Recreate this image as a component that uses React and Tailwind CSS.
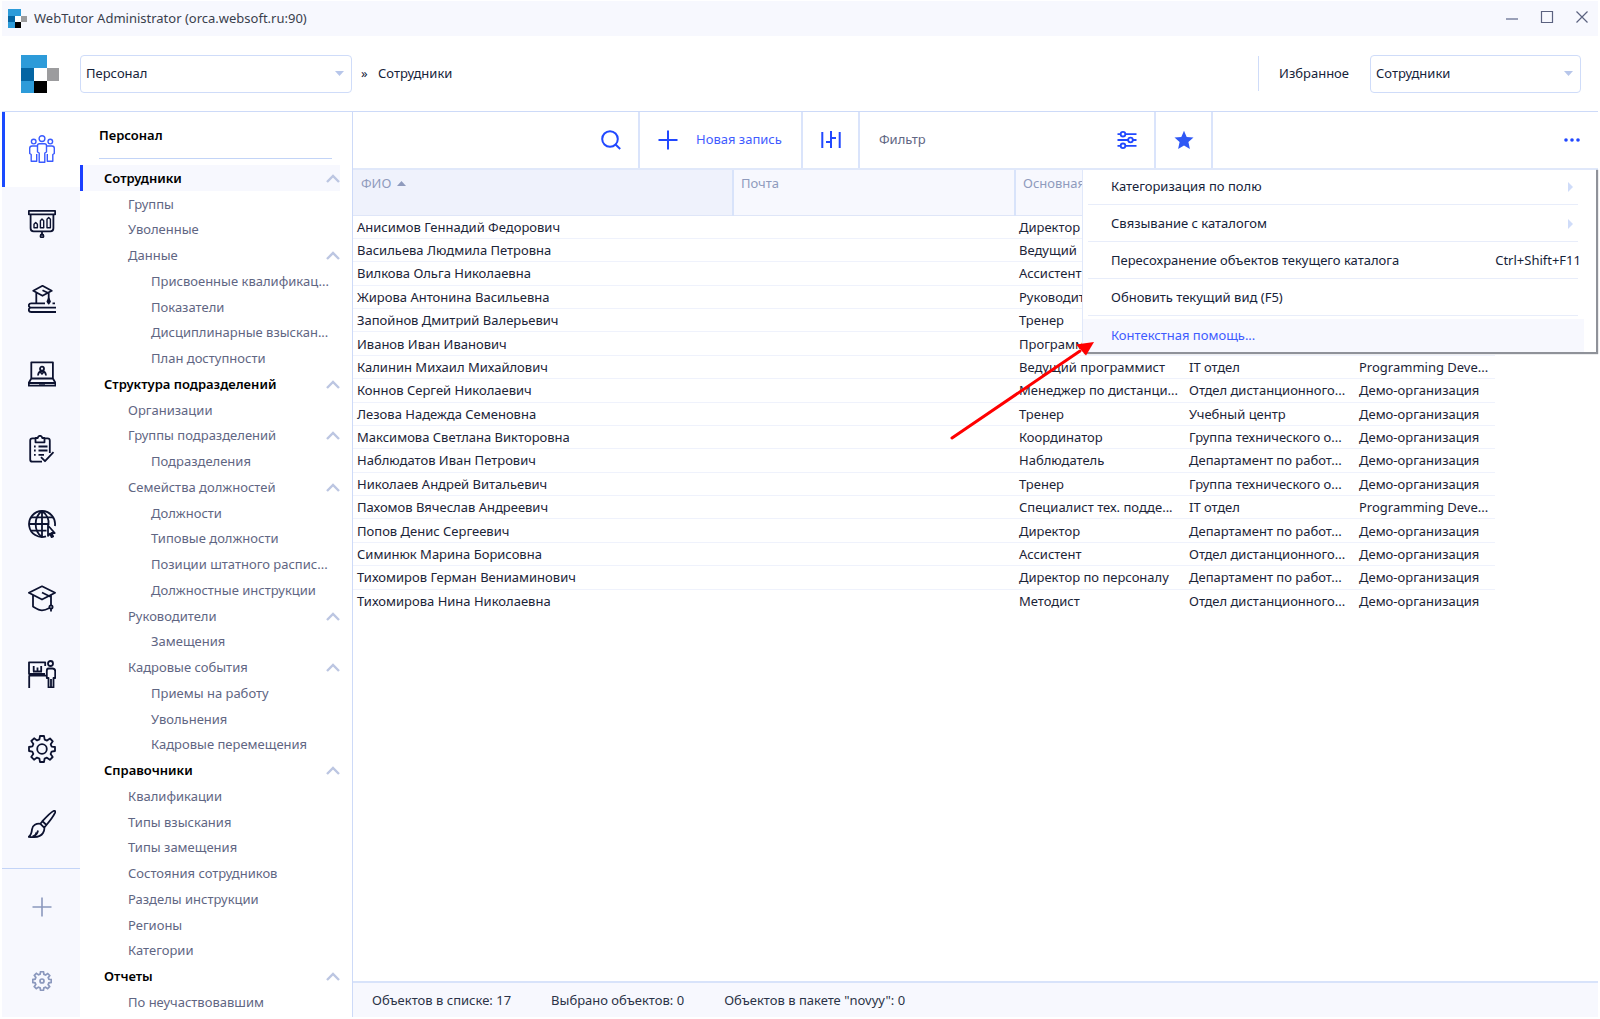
import React, { useState } from "react";

// Sidebar tree: [title, level, has children]
const treeItems = [
    ["Сотрудники", 0, true],
    ["Группы", 1, false],
    ["Уволенные", 1, false],
    ["Данные", 1, true],
    ["Присвоенные квалификац...", 2, false],
    ["Показатели", 2, false],
    ["Дисциплинарные взыскан...", 2, false],
    ["План доступности", 2, false],
    ["Структура подразделений", 0, true],
    ["Организации", 1, false],
    ["Группы подразделений", 1, true],
    ["Подразделения", 2, false],
    ["Семейства должностей", 1, true],
    ["Должности", 2, false],
    ["Типовые должности", 2, false],
    ["Позиции штатного распис...", 2, false],
    ["Должностные инструкции", 2, false],
    ["Руководители", 1, true],
    ["Замещения", 2, false],
    ["Кадровые события", 1, true],
    ["Приемы на работу", 2, false],
    ["Увольнения", 2, false],
    ["Кадровые перемещения", 2, false],
    ["Справочники", 0, true],
    ["Квалификации", 1, false],
    ["Типы взыскания", 1, false],
    ["Типы замещения", 1, false],
    ["Состояния сотрудников", 1, false],
    ["Разделы инструкции", 1, false],
    ["Регионы", 1, false],
    ["Категории", 1, false],
    ["Отчеты", 0, true],
    ["По неучаствовавшим", 1, false],
];

const levelClass = ["pl-[21px] font-semibold text-black", "pl-[45px] text-[#5f6683]", "pl-[68px] text-[#5f6683]"];

const employees = [
    ["Анисимов Геннадий Федорович", "Директор", "", ""],
    ["Васильева Людмила Петровна", "Ведущий", "", ""],
    ["Вилкова Ольга Николаевна", "Ассистент", "", ""],
    ["Жирова Антонина Васильевна", "Руководитель", "", ""],
    ["Запойнов Дмитрий Валерьевич", "Тренер", "", ""],
    ["Иванов Иван Иванович", "Программист", "", ""],
    ["Калинин Михаил Михайлович", "Ведущий программист", "IT отдел", "Programming Deve..."],
    ["Коннов Сергей Николаевич", "Менеджер по дистанци...", "Отдел дистанционного...", "Демо-организация"],
    ["Лезова Надежда Семеновна", "Тренер", "Учебный центр", "Демо-организация"],
    ["Максимова Светлана Викторовна", "Координатор", "Группа технического о...", "Демо-организация"],
    ["Наблюдатов Иван Петрович", "Наблюдатель", "Департамент по работ...", "Демо-организация"],
    ["Николаев Андрей Витальевич", "Тренер", "Группа технического о...", "Демо-организация"],
    ["Пахомов Вячеслав Андреевич", "Специалист тех. подде...", "IT отдел", "Programming Deve..."],
    ["Попов Денис Сергеевич", "Директор", "Департамент по работ...", "Демо-организация"],
    ["Симинюк Марина Борисовна", "Ассистент", "Отдел дистанционного...", "Демо-организация"],
    ["Тихомиров Герман Вениаминович", "Директор по персоналу", "Департамент по работ...", "Демо-организация"],
    ["Тихомирова Нина Николаевна", "Методист", "Отдел дистанционного...", "Демо-организация"],
];

const menuItems = [
    { label: "Категоризация по полю", submenu: true },
    { label: "Связывание с каталогом", submenu: true },
    { label: "Пересохранение объектов текущего каталога", shortcut: "Ctrl+Shift+F11" },
    { label: "Обновить текущий вид (F5)" },
    { label: "Контекстная помощь...", active: true },
];

const gearPath =
    "M12 1h4l.7 3.6 2.3 1 3-2.1 2.8 2.8-2.1 3 1 2.3L27 12v4l-3.4.6-1 2.4 2.1 3-2.8 2.8-3-2.1-2.3 1L16 27h-4l-.6-3.4-2.4-1-3 2.1-2.8-2.8 2.1-3-1-2.3L1 16v-4l3.4-.6 1-2.4-2.1-3L6.1 3.3l3 2.1 2.3-1z";

function Logo({ className }) {
    return (
        <svg className={className} viewBox="0 0 38 38" shapeRendering="crispEdges" aria-hidden="true">
            <path fill="#2d9bd9" d="M0 0h26v13H0zM0 26h13v12H0z" />
            <path fill="#0465a3" d="M0 13h13v13H0z" />
            <path fill="#fff" d="M13 13h13v13H13z" />
            <path fill="#9c9c9e" d="M26 13h12v13H26z" />
            <path fill="#000" d="M13 26h13v12H13z" />
        </svg>
    );
}

function RailIcon({ children }) {
    return (
        <svg
            className="h-7 w-7"
            viewBox="0 0 28 28"
            fill="none"
            stroke="currentColor"
            strokeWidth="1.8"
            strokeLinejoin="round"
            aria-hidden="true"
        >
            {children}
        </svg>
    );
}

const railItems = [
    {
        name: "Персонал",
        icon: (
            <g strokeWidth="1.4">
                <circle cx="14" cy="3.6" r="2.9" />
                <circle cx="5.7" cy="6.6" r="2.3" />
                <circle cx="22.3" cy="6.6" r="2.3" />
                <path d="M11.5 8.7h5c1.2 0 2 .8 2 2V17l-1.7 1v9.3h-5.6V18l-1.7-1v-6.3c0-1.2.8-2 2-2z" />
                <path d="M9.3 11H4c-1.3 0-2.3.9-2.3 2.2v5.3l1.5 1v6.8h5.5V19M18.7 11H24c1.3 0 2.3.9 2.3 2.2v5.3l-1.5 1v6.8h-5.5V19" />
            </g>
        ),
    },
    {
        name: "Отчеты",
        icon: (
            <>
                <path d="M.8.9h26.4v3.4H.8zM2.6 4.3v14c0 2 1 3 3 3h16.8c2 0 3-1 3-3v-14M14 21.3v3" />
                <circle cx="14" cy="26" r="1.5" />
                <path strokeWidth="1.4" d="M6 17.8v-3.5l1.7-1.7 1.7 1.7v3.5zM12.4 17.8v-7l1.6-1.7 1.7 1.7v7zM19 17.8V9.3l1.7-1.7 1.7 1.7v8.5z" />
            </>
        ),
    },
    {
        name: "Обучение",
        icon: (
            <>
                <path d="M14.5.8 5.3 5.8l9.2 5 9.2-5zM8.3 7.8V18M14.5 5.3l6.2 3v6" />
                <path fill="currentColor" d="m20.7 13.5-1.3 3 1.3 2 1.3-2z" />
                <path d="M17 18.3H3.3c-1.6 0-2.5 1-2.5 2.2s.9 2.2 2.5 2.2H28M24.5 18.3H27M2.5 22.7C1.4 23 .8 23.8.8 25s.9 2 2.500 2H28" />
            </>
        ),
    },
    {
        name: "Вебинары",
        icon: (
            <>
                <path d="M3.3 18.5V2.3h21.600v16.200M3.300 18.500.8 22.700v3h26.600v-3l-2.500-4.200M3.300 18.500h21.600M.8 23h26.400M11 23.600h6" />
                <circle cx="14" cy="8.7" r="2" />
                <path d="M10 15.500c.3-2.700 1.700-4.300 4-4.300s3.700 1.600 4 4.300M12 11.500l2 2.300 2-2.300" />
            </>
        ),
    },
    {
        name: "Тестирование",
        icon: (
            <>
                <path d="M7.500 3.300h-3c-1.500 0-2.300.8-2.300 2.300v18.800c0 1.500.8 2.300 2.300 2.300H14M16.500 3.300h3c1.500 0 2.300.8 2.300 2.300V18M7.500 3h2.200C10 1.500 10.700.8 12 .8s2 .7 2.300 2.200h2.200v4.300h-9z" />
                <path d="M10.500 11.500h9M10.500 15.500h9M10.500 19.800h5.500M6 11.500h1.700M6 15.500h1.700M6 19.800h1.700M13 22.200l4 4 8.500-9" />
            </>
        ),
    },
    {
        name: "Портал",
        icon: (
            <>
                <path d="M18 26.400A13 13 0 1 1 26.900 16" />
                <path d="M14 .9v26.200M14 .9C5.500 7 5.500 21 14 27.100M14 .9c5 3.600 7.200 8.600 6.500 14M.9 14h20M3 7.300h22M3 20.700h15.500" />
                <path d="M20 15.500v10.300l2-2.200 1.600 3.500 1.500-.7-1.600-3.400h3.200z" />
            </>
        ),
    },
    {
        name: "Курсы",
        icon: (
            <>
                <path d="M14 1.300.9 7.800 14 14.500l13.100-6.700zM5 10v11.500c2.500 1.500 6 3.800 9 3.800 2.300 0 5-1 7.500-2.300M14 7.500l9 4.500v8.500M23 12V9.800" />
                <circle cx="23" cy="22" r="1.6" />
                <path d="M23 23.600v3" />
            </>
        ),
    },
    {
        name: "Мероприятия",
        icon: (
            <>
                <path d="M17.200 6V2.300H1v11.500h16M.5 15.700h17.500M1.200 16v12M5 11.500h9M5.700 6v5.500M9.500 7.500v4M13.200 6v5.500M9.500 13.800v2" />
                <circle cx="22.500" cy="3.500" r="2.500" />
                <path d="M20.500 8.500h4c1.700 0 2.700 1 2.700 2.700V18h-1.700v9.500h-5V18h-1.700v-7c0-1.500.5-2.500 1.700-2.500zM23 19v8" />
            </>
        ),
    },
    {
        name: "Настройки",
        icon: (
            <>
                <path d={gearPath} />
                <circle cx="14" cy="14" r="4.800" />
            </>
        ),
    },
    {
        name: "Дизайн",
        icon: (
            <>
                <path d="M25.500 1c1.500-.5 2.200.3 1.600 1.700-1.400 2.900-4.800 7.800-8.700 12.300l-4-3.800C18.300 7 22.900 2.200 25.500 1zM14.400 11.200l-2 2.600 3.800 3.800 2.200-2.600M12.400 13.800c-4-.5-7.900 1.200-8.400 5.500-.3 3-.8 5.500-3.200 7.500 6 .8 12-.2 14.200-3.800 1.200-2 1.600-3.800 1.200-5.400M4.500 26.500c3-1 5-3 5.500-6M8 22.500v2.500" />
            </>
        ),
    },
];

function Rail() {
    return (
        <nav className="flex w-[78px] shrink-0 flex-col bg-[#f7f8fe] text-[#0c1230]">
            {railItems.map((item, index) => (
                <button
                    key={item.name}
                    aria-label={item.name}
                    className={`flex h-[75px] items-center justify-center border-l-[3px] pr-px pb-px ${
                        index === 0 ? "border-[#1a4bff] bg-white text-[#3a5bff]" : "border-transparent"
                    }`}
                >
                    <RailIcon>{item.icon}</RailIcon>
                </button>
            ))}
            <div className="mt-auto flex flex-col border-t border-[#c3d4f7] pl-0.5 text-[#8b98bd]">
                <button aria-label="Добавить" className="flex h-[74px] items-center justify-center pt-0.5">
                    <svg className="h-5 w-5" viewBox="0 0 20 20" stroke="currentColor" strokeWidth="1.6" aria-hidden="true">
                        <path d="M10 .5v19M.5 10h19" />
                    </svg>
                </button>
                <button aria-label="Параметры" className="flex h-[74px] items-center justify-center pt-0.5">
                    <svg className="h-5 w-5" viewBox="0 0 28 28" fill="none" stroke="currentColor" strokeWidth="2.4" aria-hidden="true">
                        <path d={gearPath} />
                        <circle cx="14" cy="14" r="2.8" />
                    </svg>
                </button>
            </div>
        </nav>
    );
}

function Sidebar() {
    return (
        <aside className="flex w-[273px] shrink-0 flex-col border-r border-[#cddaf8] pb-0.5">
            <h2 className="mr-[20px] ml-[19px] flex h-[47px] items-center border-b border-[#c3d4f7] pt-0.5 font-semibold text-black">
                Персонал
            </h2>
            <ul className="mt-1.5 flex flex-1 flex-col">
                {treeItems.map(([title, level, open], index) => (
                    <li
                        key={title}
                        className={`mr-3 flex flex-1 items-center justify-between border-l-[3px] ${
                            index === 0 ? "border-[#1a3fff] bg-[#f7f8fe]" : "border-transparent"
                        }`}
                    >
                        <a href="#" className={`leading-5 whitespace-nowrap ${levelClass[level]}`}>
                            {title}
                        </a>
                        {open && (
                            <button aria-label="Свернуть">
                                <svg className="h-3.5 w-3.5" viewBox="0 0 14 14" fill="none" stroke="#bcc6e2" strokeWidth="2.4" aria-hidden="true">
                                    <path d="M1 11 7 5l6 6" />
                                </svg>
                            </button>
                        )}
                    </li>
                ))}
            </ul>
        </aside>
    );
}

function SelectBox({ id, value, className, label }) {
    return (
        <div className={`relative ${className}`}>
            <select
                id={id}
                aria-label={label}
                defaultValue={value}
                className="h-[38px] w-full appearance-none rounded border border-[#cfdcf9] bg-white pl-[5px] text-[#16233a]"
            >
                <option>{value}</option>
            </select>
            <svg className="pointer-events-none absolute top-4 right-2 h-[5px] w-[9px]" viewBox="0 0 9 5" fill="#b7c6ea" aria-hidden="true">
                <path d="M0 0h9L4.500 5z" />
            </svg>
        </div>
    );
}

function TopBar() {
    return (
        <>
            <div className="flex h-[35px] items-center bg-[#f7f8fe]">
                <Logo className="ml-1.5 h-[19px] w-[19px]" />
                <h1 className="ml-[7px] flex-1 text-[#3a3f4d]">WebTutor Administrator (orca.websoft.ru:90)</h1>
                <div className="mr-[9px] flex items-center gap-[21px] pb-[3px] text-[#5b6280]">
                    <button aria-label="Свернуть окно">
                        <svg className="h-3.5 w-3.5" viewBox="0 0 14 14" stroke="#9aa0b8" strokeWidth="2" aria-hidden="true">
                            <path d="M1 9h12" />
                        </svg>
                    </button>
                    <button aria-label="Развернуть окно">
                        <svg className="h-3.5 w-3.5" viewBox="0 0 14 14" fill="none" stroke="currentColor" strokeWidth="1.2" aria-hidden="true">
                            <path d="M1.500 1.500h11v11h-11z" />
                        </svg>
                    </button>
                    <button aria-label="Закрыть окно">
                        <svg className="h-3.5 w-3.5" viewBox="0 0 14 14" stroke="currentColor" strokeWidth="1.2" aria-hidden="true">
                            <path d="m1.500 1.500 11 11M12.500 1.500l-11 11" />
                        </svg>
                    </button>
                </div>
            </div>
            <header className="flex h-[76px] items-center border-b border-[#cddaf8]">
                <Logo className="ml-[19px] h-[38px] w-[38px]" />
                <SelectBox id="section" label="Раздел" value="Персонал" className="ml-[21px] w-[272px]" />
                <nav className="flex flex-1 items-center text-[#16233a]">
                    <span className="ml-[9px] w-[17px]">»</span>
                    <a href="#">Сотрудники</a>
                </nav>
                <label htmlFor="favorites" className="flex h-[35px] items-center border-l border-[#cfdcf9] pl-5 text-[#16233a]">
                    Избранное
                </label>
                <SelectBox id="favorites" value="Сотрудники" className="mr-[17px] ml-[21px] w-[211px]" />
            </header>
        </>
    );
}

function Toolbar() {
    return (
        <div className="flex h-[58px] shrink-0 items-stretch border-b-2 border-[#e0e8fa] text-[#2148ff]">
            <div className="flex w-[287px] items-center border-r-2 border-[#dae4fb] pr-[17px]">
                <input type="text" aria-label="Поиск" className="min-w-0 flex-1 outline-none" />
                <button aria-label="Найти">
                    <svg className="h-5 w-5" viewBox="0 0 20 20" fill="none" stroke="currentColor" strokeWidth="2" aria-hidden="true">
                        <circle cx="9" cy="9" r="7.8" />
                        <path d="m14.500 14.500 4.700 4.500" />
                    </svg>
                </button>
            </div>
            <button className="flex w-[163px] items-center border-r-2 border-[#dae4fb] pl-[18px]">
                <svg className="mr-[18px] h-5 w-5" viewBox="0 0 20 20" stroke="currentColor" strokeWidth="2" aria-hidden="true">
                    <path d="M10 .5v19M.5 10h19" />
                </svg>
                <span className="text-[#3f5cff]">Новая запись</span>
            </button>
            <button aria-label="Настройка колонок" className="flex w-[57px] items-center justify-center border-r-2 border-[#dae4fb]">
                <svg className="h-5 w-5" viewBox="0 0 20 20" fill="none" stroke="currentColor" strokeWidth="2" aria-hidden="true">
                    <path d="M1.300 2v16M18.700 2v16M10 1v17M5 12h5M10 8h5" />
                </svg>
            </button>
            <div className="flex w-[296px] items-center border-r-2 border-[#dae4fb] pr-[17px] pl-[19px]">
                <input
                    type="text"
                    aria-label="Фильтр"
                    placeholder="Фильтр"
                    className="min-w-0 flex-1 outline-none placeholder:text-[#5f6683]"
                />
                <button aria-label="Параметры фильтра">
                    <svg className="h-5 w-5" viewBox="0 0 20 20" fill="none" stroke="currentColor" strokeWidth="1.8" aria-hidden="true">
                        <path d="M.5 4.200h3.200M8.300 4.200h11.200M.5 10h10.700M15.800 10h3.700M.5 15.800h3.200M8.300 15.800h11.200" />
                        <circle cx="6" cy="4.200" r="2.300" />
                        <circle cx="13.500" cy="10" r="2.300" />
                        <circle cx="6" cy="15.800" r="2.300" />
                    </svg>
                </button>
            </div>
            <button aria-label="В избранное" className="flex w-[57px] items-center justify-center border-r-2 border-[#dae4fb]">
                <svg className="h-5 w-5" viewBox="0 0 20 20" fill="#2f58f5" aria-hidden="true">
                    <path d="m10 .8 2.700 6.200 6.800.6-5.100 4.500 1.500 6.900L10 15.500l-5.900 3.500 1.500-6.900L.5 7.600 7.300 7z" />
                </svg>
            </button>
            <button aria-label="Еще" className="mr-[18px] ml-auto">
                <svg className="h-1 w-4" viewBox="0 0 16 4" fill="currentColor" aria-hidden="true">
                    <circle cx="2" cy="2" r="1.8" />
                    <circle cx="8" cy="2" r="1.8" />
                    <circle cx="14" cy="2" r="1.8" />
                </svg>
            </button>
        </div>
    );
}

function EmployeeTable() {
    return (
        <table className="h-[442px] w-[1142px] table-fixed border-collapse">
            <colgroup>
                <col className="w-[380px]" />
                <col className="w-[282px]" />
                <col className="w-[170px]" />
                <col className="w-[170px]" />
                <col className="w-[140px]" />
            </colgroup>
            <thead>
                <tr className="h-[45px] border-b border-[#dfe6f8] bg-[#f7f8fe] text-left text-[#8f9bbd]">
                    <th className="border-r-2 border-[#d8e3fa] bg-[#eff2fc] pt-[3px] pl-2 align-top leading-5 font-normal">
                        <span className="flex items-center gap-1.5">
                            ФИО
                            <svg className="h-[5px] w-[9px]" viewBox="0 0 9 5" fill="#8f9bbd" aria-hidden="true">
                                <path d="M0 5h9L4.500 0z" />
                            </svg>
                        </span>
                    </th>
                    <th className="border-r-2 border-[#d8e3fa] pt-[3px] pl-[7px] align-top leading-5 font-normal">Почта</th>
                    <th className="pt-[3px] pl-[7px] align-top leading-5 font-normal">Основная</th>
                    <th></th>
                    <th></th>
                </tr>
            </thead>
            <tbody className="text-[#1b2438]">
                {employees.map(([name, position, department, company]) => (
                    <tr key={name} className="border-b border-[#eff2fc] leading-5 whitespace-nowrap last:border-b-0">
                        <td className="pl-1">{name}</td>
                        <td></td>
                        <td className="pl-1">{position}</td>
                        <td className="pl-1">{department}</td>
                        <td className="pl-1">{company}</td>
                    </tr>
                ))}
            </tbody>
        </table>
    );
}

function ContextMenu() {
    return (
        <div
            role="menu"
            className="absolute top-[56px] right-[2px] w-[514px] border-t-2 border-l border-[#e0e8fa] bg-white shadow-[2px_2px_1px_#8f9299]"
        >
            {menuItems.map((item) => (
                <div key={item.label} className={item.active ? "pt-px" : "h-[37px]"}>
                    <button
                        role="menuitem"
                        className={`flex items-center justify-between pl-7 text-left ${
                            item.active
                                ? "h-[33px] w-[501px] bg-[#f7f8fe] text-[#3f5cff]"
                                : "h-[34px] w-[498px] text-[#16233a]"
                        }`}
                    >
                        {item.label}
                        {item.submenu && (
                            <svg className="mr-2 h-2.5 w-[5px]" viewBox="0 0 5 10" fill="#cfdcf9" aria-hidden="true">
                                <path d="M0 0v10l5-5z" />
                            </svg>
                        )}
                        {item.shortcut && <span>{item.shortcut}</span>}
                    </button>
                    {!item.active && <div className="mr-[18px] ml-[5px] h-px bg-[#e8edfa]"></div>}
                </div>
            ))}
        </div>
    );
}

export default function App() {
    const [menuOpen] = useState(true);

    return (
        <div className="flex min-h-screen flex-col bg-white px-0.5 pt-px pb-0.5 font-['Noto_Sans',sans-serif] text-[13px]">
            <TopBar />
            <div className="flex flex-1">
                <Rail />
                <Sidebar />
                <main className="relative flex min-w-0 flex-1 flex-col">
                    <Toolbar />
                    <div className="flex-1">
                        <EmployeeTable />
                    </div>
                    <footer className="flex h-9 items-center gap-10 border-t-2 border-[#d8e3fa] bg-[#f7f8fe] pt-0.5 pl-[19px] text-[#2b3347]">
                        <span>Объектов в списке: 17</span>
                        <span>Выбрано объектов: 0</span>
                        <span>Объектов в пакете "novyy": 0</span>
                    </footer>
                    {menuOpen && <ContextMenu />}
                    {/* pointer to the help item */}
                    <svg className="pointer-events-none absolute top-[228px] right-[502px] h-[102px] w-[146px]" viewBox="0 0 146 102" aria-hidden="true">
                        <path d="M2 98 130 11" stroke="#f00" strokeWidth="3" strokeLinecap="round" />
                        <path d="m144 2-8 13.500L126 4.500z" fill="#f00" />
                    </svg>
                </main>
            </div>
        </div>
    );
}
